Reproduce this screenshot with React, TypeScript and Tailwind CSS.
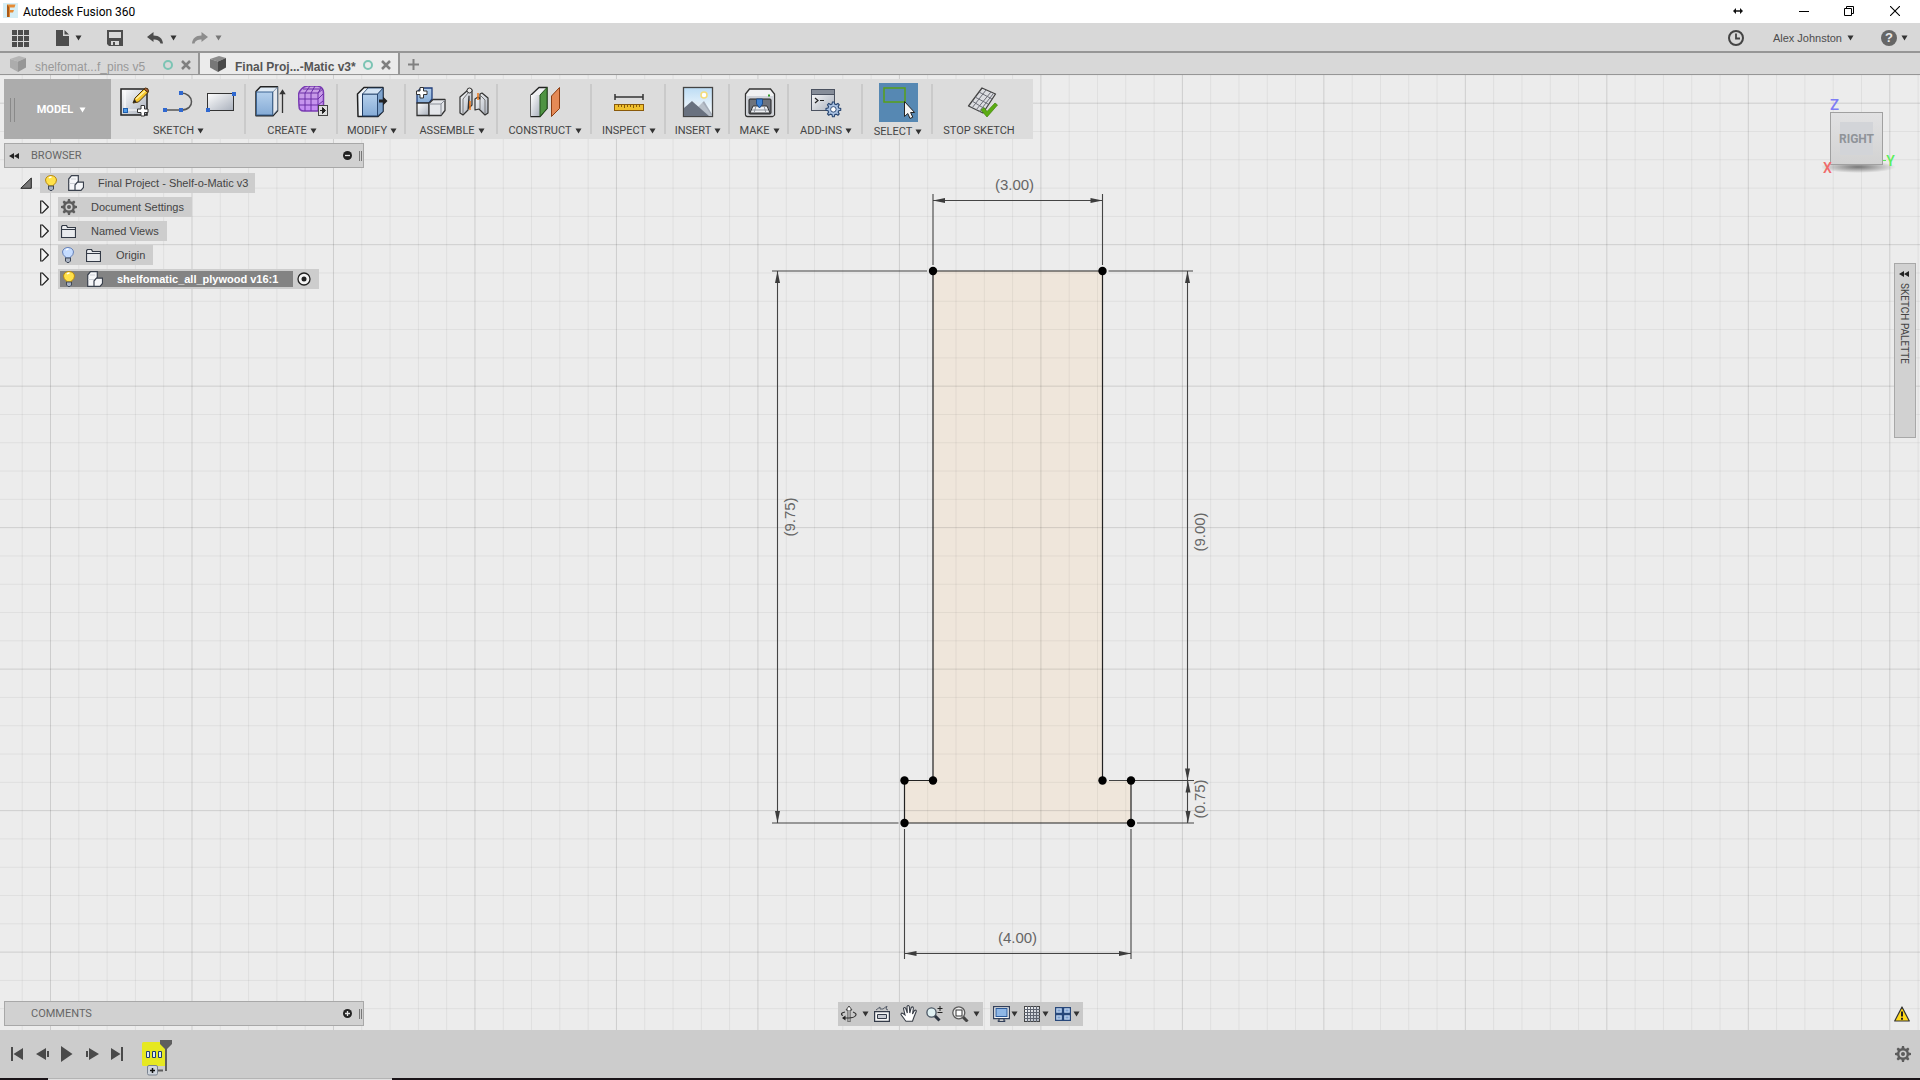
import type { ReactNode } from "react";
import clsx from "clsx";

const MINOR = 28.297;
const ORIGIN_X = 50.5;
const ORIGIN_Y = 103.2;

const Caret = ({ className = "text-[#333]" }: { className?: string }) => (
  <svg width="7" height="6" viewBox="0 0 7 6" className={clsx("shrink-0", className)}>
    <path d="M0.500 0.500h6L3.500 5.500z" fill="currentColor" />
  </svg>
);

const Pic = ({ w = 32, h = 32, children }: { w?: number; h?: number; children: ReactNode }) => (
  <svg width={w} height={h} viewBox={`0 0 ${w} ${h}`} fill="none" className="shrink-0">
    {children}
  </svg>
);

const GEAR =
  "M7 0h2l.5 2.2 1.5.6L13 1.6 14.4 3l-1.2 2 .6 1.5 2.2.5v2l-2.2.5-.6 1.5 1.2 2-1.4 1.4-2-1.2-1.5.6L9 16H7l-.5-2.2-1.500-.6-2 1.200L1.600 13l1.200-2-.6-1.500L0 9V7l2.200-.5.6-1.500-1.200-2L3 1.600l2 1.200 1.500-.6z";

const Gear = () => (
  <Pic w={16} h={16}>
    <path d={GEAR} fill="#5c5c5c" />
    <circle cx="8" cy="8" r="3.600" fill="#ccc" />
    <circle cx="8" cy="8" r="2" fill="#5c5c5c" />
  </Pic>
);

const Plus = ({ x, y }: { x: number; y: number }) => (
  <path
    transform={`translate(${x} ${y})`}
    d="M4 .5h3.500v3.500h3.500v3.500h-3.500v3.500h-3.500v-3.500h-3.500v-3.500h3.500z"
    fill="#fff"
    stroke="#333"
  />
);

/* ---------- ribbon icons ---------- */

const SketchIcon = () => (
  <Pic>
    <rect x="1" y="3" width="26" height="26" fill="url(#steel)" stroke="#222" strokeWidth="1.500" />
    <path d="M5 5v19h16" stroke="#fff" />
    <rect x="3.500" y="22.500" width="4" height="4" fill="#4f9be8" stroke="#1f5fae" />
    <path d="M13 17l2-5L24 3l4 3.500-9.500 9.500z" fill="#f7c72c" stroke="#4a3210" />
    <path d="M16 13l9-8" stroke="#fff2a8" strokeWidth="1.500" />
    <path d="M24 3l1.500-1q3 0 3 3L28 6.500z" fill="#b5653a" stroke="#4a3210" />
    <path d="M13 17l1.500-3.500 2 2z" fill="#222" />
    <Plus x={17} y={19} />
  </Pic>
);

const SplineIcon = () => (
  <Pic>
    <path d="M2 24h16c15 0 13-17 0-17" stroke="#555" strokeWidth="1.500" />
    {[[0, 22], [16, 22], [16, 5]].map(([x, y]) => (
      <rect key={`${x}-${y}`} x={x} y={y} width="4" height="4" fill="#2f68d0" />
    ))}
  </Pic>
);

const RectIcon = () => (
  <Pic>
    <rect x="1.500" y="7.500" width="26" height="17" fill="url(#steel)" stroke="#333" />
    <rect x="0" y="22" width="4" height="4" fill="#2f68d0" />
    <rect x="26" y="6" width="4" height="4" fill="#2f68d0" />
  </Pic>
);

const ExtrudeIcon = () => (
  <Pic>
    <path d="M1 5.500L5.500 .8h17v24l-4.500 5H1z" fill="#dfeaf5" stroke="#222" strokeWidth="1.500" strokeLinejoin="round" />
    <rect x="1.500" y="6" width="16" height="23" fill="url(#blue)" stroke="#3b6391" />
    <path d="M18 6L22.500 1v23L18 29z" fill="#e6e9ee" stroke="#57708c" strokeWidth=".7" />
    <path d="M27.500 27V5M25.500 7.500l2-3 2 3z" stroke="#333" fill="#333" strokeWidth="1.300" />
  </Pic>
);

const FormIcon = () => (
  <Pic>
    <g transform="translate(-1 -1)">
      <path d="M1.500 10q0-3 3-6t6-3h10q6 1 6 7v13q-1 4-4 5H7q-5 0-5-5z" fill="url(#purple)" stroke="#7a3cb3" strokeWidth="1.500" />
      <path d="M2 14h19l5-5M2 20h19l5-4M8 26V8l5-7M14 26V8l4-7M21 26V8l3-5M3 8h18l5-4M6 4h17" stroke="#6a2fa6" strokeWidth="1" />
      <rect x="21.500" y="20.500" width="9" height="10" fill="#ddd" stroke="#444" />
      <path d="M23 25.500h5M25.500 22.500l3 3-3 3z" stroke="#222" fill="#222" />
    </g>
  </Pic>
);

const ModifyIcon = () => (
  <Pic>
    <path d="M1.500 8L8 1.500h19v24l-5 5h-20z" fill="#eef3f8" stroke="#222" strokeWidth="1.500" strokeLinejoin="round" />
    <path d="M6.500 8h15v22h-15z" fill="url(#blue)" stroke="#1f3d66" />
    <path d="M21.500 8L27 2v23.500l-5.500 4.500z" fill="#7ea3cc" stroke="#1f3d66" strokeWidth=".8" />
    <path d="M6.500 8L12 2h15l-5.500 6z" fill="#d3e3f3" stroke="#1f3d66" strokeWidth=".8" />
    <path d="M23 13.500h4v-3l4.500 4.500-4.500 4.500v-3h-4z" fill="#222" />
  </Pic>
);

const AssembleIcon = () => (
  <Pic>
    <path d="M2 17V6l4-4h11v11l-3 4z" fill="url(#blue)" stroke="#1f3d7a" strokeWidth="1.300" />
    <path d="M2 17h12v12.500H2z" fill="url(#steel)" stroke="#333" strokeWidth="1.300" />
    <path d="M14 17.500l4-4h12v11l-4 5H14z" fill="#e4e6ea" stroke="#333" strokeWidth="1.300" strokeLinejoin="round" />
    <path d="M14 18h12v11M26 18l4-4" stroke="#8a8f98" />
    <Plus x={1} y={1} />
  </Pic>
);

const JointIcon = () => (
  <Pic>
    <path d="M2 11l8-7q1-2 4 0v15l-3 3V10l-1 14-5 5-3-2z" fill="url(#steel)" stroke="#333" strokeWidth="1.200" strokeLinejoin="round" />
    <path d="M5 13v15M5 13l5-6" stroke="#777" />
    <circle cx="11.500" cy="4.500" r="2.500" fill="#e8e8e8" stroke="#333" />
    <path d="M22 8l2-1 6 5v15l-3 2-6-6-4 1V13l3-2 2 2z" fill="url(#steel)" stroke="#333" strokeWidth="1.200" strokeLinejoin="round" />
    <path d="M27 14v14M22 9l5 5M22 13v10" stroke="#777" />
    <path d="M12 15v9M20 7v7" stroke="#f07818" strokeWidth="1.500" />
  </Pic>
);

const ConstructIcon = () => (
  <Pic>
    <path d="M2 9l8-7.500h8v21L11 30.500H2z" fill="#eff0f2" stroke="#222" strokeWidth="1.300" />
    <path d="M2 9h9v21H2z" fill="url(#steel)" />
    <path d="M11 9l7-7.500v21L11 30.500z" fill="#4f9342" stroke="#23521b" />
    <path d="M22.500 10l8-8.500v21l-8 8z" fill="#e58a56" stroke="#8c3d12" />
  </Pic>
);

const InspectIcon = () => (
  <Pic>
    <path d="M2 11h28M2 8v6M30 8v6" stroke="#333" strokeWidth="1.500" />
    <rect x="1.500" y="18.500" width="29" height="6" fill="#efc02e" stroke="#8a5a0a" />
    <path d="M5.500 19v2M8.500 19v2M11.500 19v3M14.500 19v2M17.500 19v2M20.500 19v3M23.500 19v2M26.500 19v2" stroke="#8a5a0a" />
  </Pic>
);

const InsertIcon = () => (
  <Pic>
    <rect x="1.500" y="1.500" width="29" height="29" fill="url(#sky)" stroke="#444" strokeWidth="1.300" />
    <circle cx="22" cy="9" r="3" fill="#fff" stroke="#f4dc7a" strokeWidth="1.500" />
    <path d="M14 23l8-8 8 13v2H14z" fill="#a4acb8" />
    <path d="M2 22l8-7 17 15H2z" fill="#69717f" />
    <path d="M10 15l17 15h3L21 17z" fill="#dfe5ec" opacity=".35" />
  </Pic>
);

const MakeIcon = () => (
  <Pic>
    <path d="M1.500 8l4-5h21l4 5v21q-1 1.500-2 1.500h-25q-2 0-2-2z" fill="#f0f1f3" stroke="#333" strokeWidth="1.300" />
    <path d="M2 10h28v19H2z" fill="#d0d3d9" />
    <rect x="24" y="8.500" width="2" height="2" fill="#2f9a26" />
    <rect x="5" y="13" width="22" height="15" rx="1" fill="#6e737c" stroke="#222" />
    <path d="M9 20h14l3 7H6z" fill="#eef0f3" stroke="#333" />
    <path d="M12.500 13h6v5l-3 4-3-4z" fill="#3f82d2" stroke="#1d4d8c" />
    <path d="M8 24h16M12 20l-2 7M20 20l2 7" stroke="#8f949c" />
  </Pic>
);

const AddinsIcon = () => (
  <Pic>
    <rect x="1.500" y="3.500" width="23" height="21" fill="url(#steel)" stroke="#4b5260" />
    <path d="M2 4h22v4H2z" fill="#868d99" />
    <path d="M2 8.500h22" stroke="#4b5260" />
    <path d="M5 12l3 2.500-3 2.500M10 14.500h4" stroke="#222" strokeWidth="1.200" />
    <g transform="translate(16 16) scale(.92)">
      <path d={GEAR} fill="#a9c2e3" stroke="#27446f" strokeWidth="1.200" />
      <circle cx="8" cy="8" r="3" fill="#fff" stroke="#27446f" />
    </g>
  </Pic>
);

const SelectIcon = () => (
  <Pic w={39} h={39}>
    <rect x="5" y="5" width="21" height="14" stroke="#58a018" strokeWidth="1.500" />
    <path d="M25.500 18.500v15l3.300-3 2.200 5 2.800-1.300-2.200-4.700h4z" fill="#f4f4f4" stroke="#222" />
  </Pic>
);

const StopIcon = () => (
  <Pic w={40}>
    <g transform="translate(8 0)">
      <path d="M1.500 20L15 2l13.500 6L16 27z" fill="#dcdde1" stroke="#444" strokeWidth="1.300" strokeLinejoin="round" />
      <path d="M5 22L19 4M9 24L24 6M12 26L26 8M5 15l13 8M8 11l13 7M12 6l13 7" stroke="#6d6f78" />
      <path d="M14 24l3-2.500 3 4L28 17l2.500 2L20 31z" fill="#5bab12" stroke="#3f850a" strokeWidth=".7" />
    </g>
  </Pic>
);

type Group = { label: string; icons: (() => ReactNode)[]; width: string; active?: boolean; plain?: boolean };

const groups: Group[] = [
  { label: "SKETCH", icons: [SketchIcon, SplineIcon, RectIcon], width: "w-[135px]" },
  { label: "CREATE", icons: [ExtrudeIcon, FormIcon], width: "w-[92px]" },
  { label: "MODIFY", icons: [ModifyIcon], width: "w-[68px]" },
  { label: "ASSEMBLE", icons: [AssembleIcon, JointIcon], width: "w-[92px]" },
  { label: "CONSTRUCT", icons: [ConstructIcon], width: "w-[94px]" },
  { label: "INSPECT", icons: [InspectIcon], width: "w-[74px]" },
  { label: "INSERT", icons: [InsertIcon], width: "w-[64px]" },
  { label: "MAKE", icons: [MakeIcon], width: "w-[59px]" },
  { label: "ADD-INS", icons: [AddinsIcon], width: "w-[74px]" },
  { label: "SELECT", icons: [SelectIcon], width: "w-[70px]", active: true },
  { label: "STOP SKETCH", icons: [StopIcon], width: "w-[92px]", plain: true },
];

function Ribbon() {
  return (
    <div className="flex h-[60px] w-fit bg-[#dcdcdc] pr-2 font-[Roboto,sans-serif]">
      <button className="relative flex w-[107px] items-center justify-center gap-1.5 bg-[#acacac] pt-0.5 pl-2 text-[11px] font-bold text-white">
        <span className="absolute left-1.5 h-6 w-[5px] border-x border-[#8a8a8a]" />
        MODEL
        <Caret className="text-white" />
      </button>
      {groups.map((g) => (
        <div
          key={g.label}
          className={clsx("relative flex flex-col items-center pt-1", g.width)}
        >
          <div className="flex h-[39px] items-center gap-[11px]">
            {g.icons.map((Icon, i) => (
              <button key={i} aria-label={`${g.label} ${i + 1}`} className={clsx(g.active && "bg-[#5688b3]")}>
                <Icon />
              </button>
            ))}
          </div>
          <button className="mt-0.5 flex h-4 items-center gap-[3px] text-[11px] leading-4 whitespace-nowrap text-[#444]">
            {g.label}
            {!g.plain && <Caret />}
          </button>
          {!g.plain && <span className="absolute top-[5px] right-0 h-[50px] w-0.5 bg-[#cacaca]" />}
        </div>
      ))}
    </div>
  );
}

/* ---------- window chrome ---------- */

function TitleBar() {
  return (
    <header className="flex h-[23px] shrink-0 items-center bg-white pr-5 pb-0.5 pl-[3px]">
      <Pic w={15} h={15}>
        <rect width="15" height="15" fill="#d5eef6" />
        <path d="M4 1.500h8.500l-1 3H7v2.500h4l-1 2.500H7V14H4z" fill="#e58b35" />
        <path d="M4 1.500L6 4v10H4z" fill="#a85a1a" />
      </Pic>
      <h1 className="ml-[5px] flex-1 pt-0.5 font-[Roboto,sans-serif] text-[12px] leading-4 text-black">Autodesk Fusion 360</h1>
      <div className="flex items-center">
        <button aria-label="Resize" className="mr-14">
          <Pic w={10} h={8}>
            <path d="M0 4l3-3v2.300h4V1l3 3-3 3V4.700H3V7z" fill="#111" />
          </Pic>
        </button>
        <button aria-label="Minimize" className="mr-[35px]">
          <Pic w={10} h={10}>
            <path d="M0 5.500h10" stroke="#000" />
          </Pic>
        </button>
        <button aria-label="Restore" className="mr-9">
          <Pic w={10} h={10}>
            <path d="M.5 2.500h7v7h-7zM2.500 2.500v-2h7v7h-2" stroke="#000" />
          </Pic>
        </button>
        <button aria-label="Close">
          <Pic w={10} h={10}>
            <path d="M0 0l10 10M10 0L0 10" stroke="#000" strokeWidth="1.100" />
          </Pic>
        </button>
      </div>
    </header>
  );
}

function QuickBar() {
  return (
    <nav className="flex h-[30px] shrink-0 items-center justify-between border-b-2 border-[#969696] bg-[#d8d8d8] pt-0.5 pr-3 pl-3 text-[#4d4d4d]">
      <div className="flex items-center">
        <button aria-label="Data panel" className="mr-[27px]">
          <Pic w={17} h={17}>
            <path d="M0 0h5v5H0zM6 0h5v5H6zM12 0h5v5h-5zM0 6h5v5H0zM6 6h5v5H6zM12 6h5v5h-5zM0 12h5v5H0zM6 12h5v5H6zM12 12h5v5h-5z" fill="#4d4d4d" />
          </Pic>
        </button>
        <button aria-label="File" className="mr-[25px] flex items-center gap-1.5">
          <Pic w={13} h={16}>
            <path d="M0 0h7v6h6v10H0zM8.500 0L13 4.500H8.500z" fill="#4d4d4d" />
          </Pic>
          <Caret />
        </button>
        <button aria-label="Save" className="mr-6">
          <Pic w={16} h={16}>
            <path fillRule="evenodd" d="M0 0h16v16H2l-2-2zM2 2v6h12V2zM4 11v4h8v-4z" fill="#4d4d4d" />
            <path d="M6 12h2v3H6z" fill="#4d4d4d" />
          </Pic>
        </button>
        <button aria-label="Undo" className="mr-[15px] flex items-center gap-[7px]">
          <Pic w={16} h={12}>
            <path d="M0 5l6.500-5v3.500c6 0 9 3 9.500 8h-2.500c-1-3-3-4-7-4V10z" fill="#4d4d4d" />
          </Pic>
          <Caret />
        </button>
        <button aria-label="Redo" className="flex items-center gap-[7px]">
          <Pic w={16} h={12}>
            <path d="M16 5L9.500 0v3.500c-6 0-9 3-9.500 8h2.500c1-3 3-4 7-4V10z" fill="#8d8d8d" />
          </Pic>
          <Caret className="text-[#777]" />
        </button>
      </div>
      <div className="flex items-center">
        <button aria-label="Job status" className="mr-[29px]">
          <Pic w={16} h={16}>
            <circle cx="8" cy="8" r="7" stroke="#444" strokeWidth="2" />
            <path d="M8 3.500V8.500h4" stroke="#444" strokeWidth="1.800" />
          </Pic>
        </button>
        <button className="mr-[27px] flex items-center gap-[5px] text-[11px]">
          Alex Johnston
          <Caret />
        </button>
        <button aria-label="Help" className="flex items-center gap-1">
          <span className="grid size-4 place-items-center rounded-full bg-[#666] text-[13px] leading-4 font-bold text-[#e8e8e8]">?</span>
          <Caret />
        </button>
      </div>
    </nav>
  );
}

const tabs = [
  { title: "shelfomat...f_pins v5", active: false },
  { title: "Final Proj...-Matic v3*", active: true },
];

function Tabs() {
  return (
    <div className="flex h-[22px] shrink-0 border-b border-[#969696] bg-[#d8d8d8]">
      {tabs.map((t) => (
        <div
          key={t.title}
          className={clsx(
            "flex w-[200px] items-center border-r-2 border-[#969696] pr-[5px] pl-2.5 pt-1",
            t.active ? "bg-[#ebebeb] font-bold text-[#555]" : "text-[#999]",
          )}
        >
          <span className={clsx("-mt-1", !t.active && "opacity-45")}>
            <Pic w={16} h={16}>
              <path d="M0 3l9-3 7 2-8 3.500z" fill="#8c8c8c" />
              <path d="M0 3l8 2.500V16L0 11.500z" fill="#777" />
              <path d="M8 5.500L16 2v9.500L8 16z" fill="#484848" />
            </Pic>
          </span>
          <button className="ml-[9px] flex-1 pt-0.5 text-left text-[12px] leading-4 whitespace-nowrap">{t.title}</button>
          <span className="-mt-0.5 mr-2 size-2.5 rounded-full border-2 border-[#7cc4b4]" />
          <button aria-label="Close tab" className="-mt-0.5 mr-0.5">
            <Pic w={10} h={10}>
              <path d="M1 1l8 8M9 1L1 9" stroke="#808080" strokeWidth="2.500" />
            </Pic>
          </button>
        </div>
      ))}
      <button aria-label="New tab" className="ml-2 pt-0.5">
        <Pic w={11} h={11}>
          <path d="M5.500 0v11M0 5.500h11" stroke="#808080" strokeWidth="2" />
        </Pic>
      </button>
    </div>
  );
}

/* ---------- browser tree ---------- */

const Bulb = ({ on = true }: { on?: boolean }) => (
  <Pic w={12} h={16}>
    <path d="M3.500 10q-3-2-3-5Q1 .8 6 .5q5 .3 5.500 4.500 0 3-3 5v1h-5z" fill={on ? "#ffe14a" : "#c5dcff"} stroke={on ? "#b98a10" : "#6480b8"} />
    <path d="M4 3q1-1 2.500-1" stroke="#fff" strokeWidth="1.500" />
    <path d="M3.500 11h5v3l-1.500 1.500H5L3.500 14z" fill="#a9b2c2" stroke="#3f4858" />
  </Pic>
);

const Component = () => (
  <Pic w={16} h={16}>
    <path d="M.7 4L3.500.7h6.800v6L8 9.500v5.800H.7z" fill="#f6f7f9" stroke="#3a414d" strokeWidth="1.200" />
    <path d="M7 10l2.500-2.800h6v5.300l-2.500 2.800H7z" fill="#f6f7f9" stroke="#3a414d" strokeWidth="1.200" />
    <path d="M1 8.500h6M3 4h5" stroke="#cdd0d6" />
  </Pic>
);

const Folder = () => (
  <Pic w={15} h={13}>
    <path d="M.5 12.500V1.500l1-1h4l1 2h8v10z" fill="#e9ebee" stroke="#333a46" strokeWidth="1.200" />
    <path d="M1 4.500h13" stroke="#333a46" />
  </Pic>
);

const Expander = () => (
  <button aria-label="Expand" className="mr-[9px]">
    <Pic w={9} h={14}>
      <path d="M.7 1v12L2.500 13 8.300 7 2.500 1z" fill="#f4f4f4" stroke="#222" strokeWidth="1.200" />
    </Pic>
  </button>
);

function PanelBar({ title, open }: { title: string; open?: boolean }) {
  return (
    <div className="relative flex h-[25px] w-[360px] items-center border border-[#a8a8a8] bg-[#d1d1d1] pr-[11px] pl-[26px] font-[Roboto,sans-serif] text-[11px] text-[#666]">
      {open && (
        <svg width="10" height="6" viewBox="0 0 10 6" className="absolute left-1">
          <path d="M5 0v6L0 3zM10 0v6L5 3z" fill="#222" />
        </svg>
      )}
      <h2 className="flex-1 pt-0.5">{title}</h2>
      <button aria-label={`Toggle ${title}`}>
        <Pic w={9} h={9}>
          <circle cx="4.500" cy="4.500" r="4.500" fill="#222" />
          <path d={open ? "M2 4.500h5" : "M2 4.500h5M4.500 2v5"} stroke="#e4e4e4" strokeWidth="1.300" />
        </Pic>
      </button>
      <span className="absolute right-[1px] h-2.5 w-[3px] border-x border-[#777]" />
    </div>
  );
}

function Browser() {
  return (
    <section className="flex flex-col">
      <PanelBar title="BROWSER" open />
      <ul className="mt-[5px] flex flex-col gap-1 text-[11px] leading-5 text-[#444]">
        <li className="flex h-5 items-center pl-4">
          <button aria-label="Collapse" className="mr-2">
            <Pic w={12} h={12}>
              <path d="M11.300 1v10.300H.8z" fill="#777" stroke="#222" />
            </Pic>
          </button>
          <span className="flex h-5 items-center bg-[#cdcdcd] pr-[7px] pl-[5px]">
            <Bulb />
            <span className="w-[11px]" />
            <Component />
            <span className="ml-3.5">Final Project - Shelf-o-Matic v3</span>
          </span>
        </li>
        <li className="flex h-5 items-center pl-9">
          <Expander />
          <span className="flex h-5 items-center bg-[#cdcdcd] pr-2 pl-[3px]">
            <Gear />
            <span className="ml-3.5">Document Settings</span>
          </span>
        </li>
        <li className="flex h-5 items-center pl-9">
          <Expander />
          <span className="flex h-5 items-center bg-[#cdcdcd] pr-2 pl-[3px]">
            <Folder />
            <span className="ml-[15px]">Named Views</span>
          </span>
        </li>
        <li className="flex h-5 items-center pl-9">
          <Expander />
          <span className="flex h-5 items-center bg-[#cdcdcd] pr-2 pl-1">
            <Bulb on={false} />
            <span className="w-3" />
            <Folder />
            <span className="ml-[15px]">Origin</span>
          </span>
        </li>
        <li className="flex h-5 items-center pl-9">
          <Expander />
          <span className="flex h-5 items-center gap-1 bg-[#cdcdcd] pr-2 pl-0.5">
            <span className="flex h-4 items-center bg-[#838383] pr-[15px] pl-[3px] font-bold text-white">
              <Bulb />
              <span className="w-3" />
              <Component />
              <span className="ml-3.5">shelfomatic_all_plywood v16:1</span>
            </span>
            <button aria-label="Activate component">
              <Pic w={14} h={14}>
                <circle cx="7" cy="7" r="6" fill="#f4f4f4" stroke="#222" strokeWidth="1.300" />
                <circle cx="7" cy="7" r="2.500" fill="#222" />
              </Pic>
            </button>
          </span>
        </li>
      </ul>
    </section>
  );
}

/* ---------- sketch canvas ---------- */

const range = (n: number) => Array.from({ length: n }, (_, i) => i);

const points = [
  [933, 271],
  [1102.5, 271],
  [904.5, 780.5],
  [933, 780.5],
  [1102.5, 780.5],
  [1131, 780.5],
  [904.5, 823],
  [1131, 823],
];

// arrow tip position and rotation, drawn pointing right at 0
const arrows = [
  [933, 200.5, 180],
  [1102.5, 200.5, 0],
  [777.5, 271, -90],
  [777.5, 823, 90],
  [1187.5, 271, -90],
  [1187.5, 780.5, 90],
  [1188, 780.5, -90],
  [1188, 823, 90],
  [904.5, 953.5, 180],
  [1131, 953.5, 0],
];

const dims = [
  { text: "(3.00)", x: 1014.5, y: 189.5, rot: 0 },
  { text: "(4.00)", x: 1017.5, y: 942.5, rot: 0 },
  { text: "(9.75)", x: 794.5, y: 517, rot: -90 },
  { text: "(9.00)", x: 1204.5, y: 532, rot: -90 },
  { text: "(0.75)", x: 1205, y: 799, rot: -90 },
];

function Canvas() {
  return (
    <svg className="absolute inset-0 size-full" viewBox="0 75 1920 955" preserveAspectRatio="xMidYMid slice">
      <defs>
        <linearGradient id="steel" x1="0" y1="0" x2="1" y2="1">
          <stop offset="0" stopColor="#fff" />
          <stop offset="1" stopColor="#a9b0bc" />
        </linearGradient>
        <linearGradient id="blue" x1="0" y1="0" x2="0" y2="1">
          <stop offset="0" stopColor="#b5d0ec" />
          <stop offset="1" stopColor="#85abd6" />
        </linearGradient>
        <linearGradient id="purple" x1="0" y1="0" x2="0" y2="1">
          <stop offset="0" stopColor="#c9a5e2" />
          <stop offset="1" stopColor="#c48af5" />
        </linearGradient>
        <linearGradient id="sky" x1="0" y1="0" x2="0" y2="1">
          <stop offset="0" stopColor="#bcdcf4" />
          <stop offset="1" stopColor="#fff" />
        </linearGradient>
      </defs>
      <path d="M933 271H1102.500V780.500H1131V823H904.500V780.500H933Z" fill="#efe6db" />
      {range(69).map((i) => {
        const x = ORIGIN_X + (i - 1) * MINOR;
        return <path key={i} d={`M${x} 75V1030`} stroke="#000" strokeOpacity={(i - 1) % 5 === 0 ? 0.13 : 0.055} />;
      })}
      {range(35).map((i) => {
        const y = ORIGIN_Y + (i - 1) * MINOR;
        return <path key={i} d={`M0 ${y}H1920`} stroke="#000" strokeOpacity={(i - 1) % 5 === 0 ? 0.13 : 0.055} />;
      })}
      <path d="M933 271H1102.500V780.500M1131 780.500V823H904.500V780.500H933V271" fill="none" stroke="#222" strokeWidth="1.200" />
      <path
        d="M933 194V265M1102.500 194V265M933 200.500H1102.500M772 271H927M772 823H898.500M777.500 271V823M1108.500 271H1193M1109 780.500H1194M1137 823H1194M1187.500 271V823M904.500 829V959M1131 829V959M904.500 953.500H1131"
        fill="none"
        stroke="#444"
        strokeWidth="1.100"
      />
      {arrows.map(([x, y, r], i) => (
        <path key={i} transform={`translate(${x} ${y}) rotate(${r})`} d="M0 0L-12-2.500V2.500Z" fill="#3c3c3c" />
      ))}
      {points.map(([x, y], i) => (
        <circle key={i} cx={x} cy={y} r="4.200" fill="#000" />
      ))}
      {dims.map((d) => (
        <text
          key={d.text}
          transform={`translate(${d.x} ${d.y}) rotate(${d.rot})`}
          textAnchor="middle"
          fontSize="15"
          fill="#666"
        >
          {d.text}
        </text>
      ))}
    </svg>
  );
}

function ViewCube() {
  return (
    <svg width="76" height="84" viewBox="0 0 76 84" className="absolute top-5 right-[22px] font-[Roboto,sans-serif]">
      <defs>
        <radialGradient id="shade">
          <stop offset="0" stopColor="#777" />
          <stop offset="1" stopColor="#777" stopOpacity="0" />
        </radialGradient>
        <linearGradient id="face" x1="0" y1="0" x2="0" y2="1">
          <stop offset="0" stopColor="#e2e2e3" />
          <stop offset="1" stopColor="#d2d2d2" />
        </linearGradient>
      </defs>
      <ellipse cx="36" cy="72" rx="38" ry="6" fill="url(#shade)" />
      <rect x="8.500" y="17.500" width="52" height="52" fill="url(#face)" stroke="#a0a0a0" />
      <rect x="18" y="27" width="33" height="33" fill="#d2d4d8" />
      <text x="34.500" y="48" textAnchor="middle" fontSize="12" fontWeight="bold" fill="#8f9398">RIGHT</text>
      <text x="12.500" y="15" textAnchor="middle" fontSize="15" fontWeight="500" fill="#7d7df5">Z</text>
      <text x="5.500" y="78" textAnchor="middle" fontSize="14" fontWeight="500" fill="#f06a6a">X</text>
      <path d="M61 65.500h3" stroke="#5cf05c" />
      <text x="68.500" y="70.500" textAnchor="middle" fontSize="14" fontWeight="500" fill="#5cf05c">Y</text>
    </svg>
  );
}

/* ---------- bottom bars ---------- */

function NavBar() {
  return (
    <div className="flex items-center gap-[7px]">
      <div className="flex h-6 items-center bg-[#c9c9c9] px-[3px]">
        <button aria-label="Orbit" className="flex items-center gap-[5px]">
          <Pic w={16} h={16}>
            <path d="M8 0l3 4H9v12H7V4H5z" fill="#fff" stroke="#333" strokeWidth=".9" />
            <path d="M12 6c6 2 2 6-4 6H2M4 6C-1 7 0 9 2 9.500" stroke="#333" strokeWidth="1.200" />
            <path d="M1 12l3.500-2.500v5z" fill="#222" />
          </Pic>
          <Caret />
        </button>
        <button aria-label="Look at" className="ml-[5px]">
          <Pic w={16} h={16}>
            <path d="M.6 5.600h14.800v9.800H.6z" fill="#f5f5f5" stroke="#333a48" strokeWidth="1.200" />
            <path d="M3.500 8.500h9v4h-9z" fill="#c9ccd3" stroke="#333a48" />
            <path d="M2 4l4-3v2h3l4-3-1 3 2 1" stroke="#555c68" />
          </Pic>
        </button>
        <button aria-label="Pan" className="ml-2.5">
          <Pic w={17} h={17}>
            <path d="M5 15L1 9.500q0-2 2-1L5 10 3.500 3.500q1-2 2.300 0L7.300 8 7 1.500q1.200-2 2.300 0L9.800 8l1.400-5.500q1.800-1.500 2.200.5L12.500 9l2-3.500q2-1 1.800.8L14 12l-1.500 4.300H6z" fill="#fff" stroke="#3a3f48" strokeWidth="1.100" />
          </Pic>
        </button>
        <button aria-label="Zoom" className="ml-[9px]">
          <Pic w={17} h={16}>
            <path d="M8.500 9.500l5 5" stroke="#2c3440" strokeWidth="3" />
            <circle cx="5.500" cy="6.500" r="4.600" fill="#dff0f2" stroke="#4a5664" strokeWidth="1.300" />
            <path d="M11.500 2.500h5M14 0v5M11.500 6.500h5" stroke="#222" />
          </Pic>
        </button>
        <button aria-label="Fit" className="ml-[9px] flex items-center gap-1">
          <Pic w={17} h={16}>
            <path d="M10.500 10.500l5 5" stroke="#444" strokeWidth="3" />
            <circle cx="6.800" cy="6.800" r="6" fill="#f2f2f2" stroke="#5a5a5a" strokeWidth="1.300" />
            <rect x="4" y="4" width="6" height="6" fill="#fff" stroke="#333" />
          </Pic>
          <Caret />
        </button>
      </div>
      <div className="flex h-6 items-center bg-[#c9c9c9] px-[3px]">
        <button aria-label="Display settings" className="flex items-center gap-px">
          <Pic w={17} h={16}>
            <path d="M.6.6h15.800v12H.6z" fill="#f4f4f4" stroke="#33405a" strokeWidth="1.200" />
            <rect x="3" y="2.500" width="11" height="8" fill="#8fb7e6" stroke="#2c5a9a" />
            <path d="M6 13v2H4.500M11 13v2h1.500M5 15.500h7" stroke="#33405a" strokeWidth="1.200" />
          </Pic>
          <Caret />
        </button>
        <button aria-label="Grid and snaps" className="ml-1.5 flex items-center gap-0.5">
          <Pic w={16} h={16}>
            <rect x=".5" y=".5" width="15" height="15" fill="url(#steel)" stroke="#444" />
            <path d="M3.500 0v16M6.500 0v16M9.500 0v16M12.500 0v16M0 3.500h16M0 6.500h16M0 9.500h16M0 12.500h16" stroke="#5e6470" />
          </Pic>
          <Caret />
        </button>
        <button aria-label="Viewports" className="ml-1.5 flex items-center gap-0.5">
          <Pic w={16} h={14}>
            <path d="M.6.6h6.800v5.800H.6zM8.600.6h6.800v5.800H8.600zM.6 7.600h6.800v5.800H.6zM8.600 7.600h6.800v5.800H8.600z" fill="#bcd2ef" stroke="#27477a" strokeWidth="1.200" />
            <path d="M2.500 2.500h3v2h-3zM10.500 2.500h3v2h-3zM2.500 9.500h3v2h-3zM10.500 9.500h3v2h-3z" fill="#7e9fce" />
          </Pic>
          <Caret />
        </button>
      </div>
    </div>
  );
}

const playback = [
  { label: "Go to start", d: "M0 1h2v14H0zM12 2v12L2.500 8z" },
  { label: "Step back", d: "M10 2v12L0 8zM11 5h2v6h-2z" },
  { label: "Play", d: "M0 0v16l11.500-8z" },
  { label: "Step forward", d: "M0 5h2v6H0zM3 2v12l10-6z" },
  { label: "Go to end", d: "M10 1h2v14h-2zM0 2v12l9.500-6z" },
];

function Timeline() {
  return (
    <footer className="flex h-12 shrink-0 items-center bg-[#ccc] pr-[9px] pl-[11px]">
      <div className="flex items-center gap-3">
        {playback.map((p) => (
          <button key={p.label} aria-label={p.label}>
            <Pic w={13} h={16}>
              <path d={p.d} fill="#4a4a4a" />
            </Pic>
          </button>
        ))}
      </div>
      <button aria-label="Timeline group" className="ml-[18px] flex-1 pt-1">
        <Pic w={32} h={40}>
          <rect y="6" width="24" height="24" rx="1.500" fill="#e6e822" />
          <path d="M4.500 15.500h3v6h-3zM10.500 15.500h3v6h-3zM16.500 15.500h3v6h-3z" fill="#dceaff" stroke="#1f3d6e" />
          <path d="M18 4h12v4l-5 5v22h-2V13l-5-5z" fill="#5e5e5e" />
          <path d="M15 34.500h6" stroke="#5e5e5e" strokeWidth="2" />
          <rect x="5.500" y="29.500" width="10" height="9.500" rx="1.500" fill="#cfd5dd" stroke="#7a8390" />
          <path d="M8 34.500h5M10.500 32v5" stroke="#111" strokeWidth="1.500" />
        </Pic>
      </button>
      <button aria-label="Timeline settings">
        <Gear />
      </button>
    </footer>
  );
}

export default function App() {
  return (
    <div className="flex h-screen flex-col overflow-hidden bg-[#ececec] font-['Liberation_Sans',Arial,sans-serif]">
      <TitleBar />
      <QuickBar />
      <Tabs />
      <main className="relative flex min-h-0 flex-1 flex-col gap-1 p-1">
        <Canvas />
        <div className="relative">
          <Ribbon />
        </div>
        <div className="relative flex-1">
          <Browser />
        </div>
        <div className="relative grid grid-cols-[360px_1fr_360px] items-center">
          <PanelBar title="COMMENTS" />
          <div className="flex justify-center">
            <NavBar />
          </div>
          <button aria-label="Warnings" className="mr-1.5 justify-self-end">
            <Pic w={16} h={16}>
              <path d="M8 1l7.300 14H.7z" fill="#ffd91a" stroke="#333" strokeWidth="1.200" strokeLinejoin="round" />
              <path d="M7 5.500h2v5H7zM7 11.800h2v2H7z" fill="#222" />
            </Pic>
          </button>
        </div>
        <ViewCube />
        <button className="absolute top-[188px] right-1 flex h-[175px] w-[22px] items-center gap-1.5 border border-[#a8a8a8] bg-[#d1d1d1] pt-[7px] pr-0.5 font-[Roboto,sans-serif] text-[10px] text-[#444] [writing-mode:vertical-rl]">
          <svg width="10" height="6" viewBox="0 0 10 6">
            <path d="M5 0v6L0 3zM10 0v6L5 3z" fill="#222" />
          </svg>
          SKETCH PALETTE
        </button>
      </main>
      <Timeline />
      <div className="flex h-0.5 shrink-0 bg-[#1a1418]">
        <span className="ml-12 w-[344px] border-t border-[#b4b4b4] bg-[#e0e0e0]" />
      </div>
    </div>
  );
}
